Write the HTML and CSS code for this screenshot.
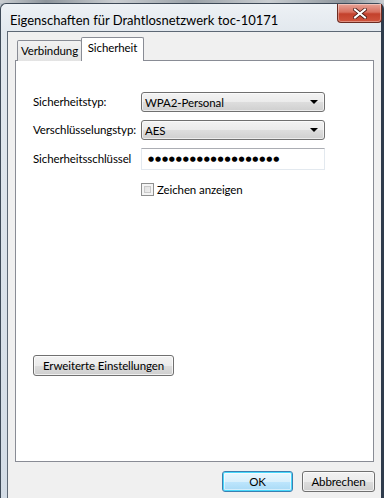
FILE: index.html
```html
<!DOCTYPE html>
<html lang="de">
<head>
<meta charset="utf-8">
<title>Eigenschaften für Drahtlosnetzwerk toc-10171</title>
<link rel="stylesheet" href="styles.css">
</head>
<body>
<div class="backdrop"></div>
<div class="window">
  <div class="titlebar">
    <span class="title">Eigenschaften für Drahtlosnetzwerk toc-10171</span>
    <button class="close" aria-label="Schließen">
      <svg width="14" height="11" viewBox="0 0 14 11"><path d="M2 1.5 L12 9.5 M12 1.5 L2 9.5" stroke="#4a1a14" stroke-width="3.6" stroke-linecap="square"/><path d="M2 1.5 L12 9.5 M12 1.5 L2 9.5" stroke="#fff" stroke-width="2" stroke-linecap="square"/></svg>
    </button>
  </div>
  <div class="client">
    <div class="tabs">
      <div class="tab">Verbindung</div>
      <div class="tab active">Sicherheit</div>
    </div>
    <div class="panel">
      <div class="form">
        <label class="lbl">Sicherheitstyp:</label>
        <div class="combo"><span>WPA2-Personal</span><span class="arrow"></span></div>
        <label class="lbl">Verschlüsselungstyp:</label>
        <div class="combo"><span>AES</span><span class="arrow"></span></div>
        <label class="lbl">Sicherheitsschlüssel</label>
        <div class="input"><span class="dots">●●●●●●●●●●●●●●●●●●●</span></div>
      </div>
      <div class="check-row">
        <span class="checkbox"></span><span>Zeichen anzeigen</span>
      </div>
      <div class="adv-row">
        <button class="btn adv">Erweiterte Einstellungen</button>
      </div>
    </div>
    <div class="footer">
      <button class="btn ok">OK</button>
      <button class="btn cancel">Abbrechen</button>
    </div>
  </div>
</div>
</body>
</html>
```

FILE: styles.css
```css
* { box-sizing: border-box; }
html, body { margin: 0; padding: 0; }
body {
  width: 384px;
  height: 498px;
  overflow: hidden;
  background: #b9c0c7;
  font-family: Lato, "Noto Sans", sans-serif;
  font-size: 11.5px;
  letter-spacing: -0.1px;
  color: #000;
}
.backdrop {
  height: 3px;
  background: linear-gradient(to right, #c9cdd1 0%, #8d949b 12%, #c9cdd1 30%, #9aa1a8 50%, #c9cdd1 70%, #8d949b 90%, #c9cdd1 100%);
}
.window {
  height: 495px;
  border: 1px solid #3e4a58;
  border-bottom: none;
  border-radius: 6px 6px 0 0;
  background: linear-gradient(to bottom, #edf1f5 0px, #e2e8ee 28px, #d3dce6 100%);
  display: flex;
  flex-direction: column;
  padding: 0 0 0 6px;
  border-right: 3px solid #2f3c4c;
}
.titlebar {
  height: 27px;
  display: flex;
  align-items: flex-start;
}
.title {
  font-size: 13px;
  letter-spacing: 0;
  padding: 8px 0 0 3px;
  color: #000;
  white-space: nowrap;
}
.close {
  margin-left: auto;
  margin-right: -1px;
  width: 45px;
  height: 19px;
  border: 1px solid #6b2b22;
  border-top: none;
  border-radius: 0 0 4px 4px;
  background: linear-gradient(to bottom, #e8a397 0%, #d8705f 45%, #c3412c 55%, #d0553e 100%);
  display: flex;
  align-items: center;
  justify-content: center;
  padding: 0;
  box-shadow: inset 0 0 0 1px rgba(255,255,255,0.35);
}
.client {
  flex: 1;
  background: #f0f0f0;
  border: 1px solid #5d6875;
  border-bottom: none;
  border-right: none;
  padding: 5px 7px 0 7px;
  display: flex;
  flex-direction: column;
}
.tabs {
  display: flex;
  align-items: flex-end;
  height: 24px;
  padding-left: 2px;
  position: relative;
  z-index: 1;
  margin-bottom: -1px;
}
.tab {
  border: 1px solid #898c95;
  border-bottom: none;
  height: 21px;
  width: 65px;
  text-align: center;
  padding-top: 3px;
  background: linear-gradient(to bottom, #f2f2f2, #e3e3e3);
  border-radius: 2px 2px 0 0;
}
.tab.active {
  height: 24px;
  width: 63px;
  background: #fff;
  margin-left: -1px;
  padding-top: 3px;
}
.panel {
  height: 402px;
  background: #fff;
  border: 1px solid #898c95;
  padding: 31px 0 0 17px;
}
.form {
  display: grid;
  grid-template-columns: 108px 184px;
  row-gap: 8px;
  align-items: center;
}
.lbl { line-height: 20px; white-space: nowrap; }
.combo {
  height: 20px;
  border: 1px solid #707070;
  border-radius: 3px;
  background: linear-gradient(to bottom, #f3f3f3 0%, #ebebeb 50%, #dddddd 51%, #cfcfcf 100%);
  box-shadow: inset 0 0 0 1px rgba(255,255,255,0.6);
  display: flex;
  align-items: center;
  padding: 0 6px 0 3px;
  justify-content: space-between;
}
.arrow {
  width: 0; height: 0;
  border-left: 4px solid transparent;
  border-right: 4px solid transparent;
  border-top: 4px solid #000;
}
.input {
  height: 22px;
  border: 1px solid #e3e9ef;
  border-top-color: #abadb3;
  background: #fff;
  display: flex;
  align-items: center;
  padding-left: 6px;
}
.dots {
  font-family: "DejaVu Sans", sans-serif;
  font-size: 7px;
  letter-spacing: 0.85px;
  color: #000;
}
.check-row {
  display: flex;
  align-items: center;
  gap: 3px;
  margin: 13px 0 0 108px;
  height: 13px;
}
.checkbox {
  width: 13px; height: 13px;
  border: 1px solid #8e8f8f;
  background: linear-gradient(135deg, #d9d9d9, #f6f6f6);
  box-shadow: inset 0 0 0 2px #f4f4f4, inset 0 0 0 3px #c9c9c9;
}
.adv-row { margin-top: 159px; }
.btn {
  font: inherit;
  letter-spacing: inherit;
  color: #000;
  height: 21px;
  border: 1px solid #707070;
  border-radius: 3px;
  background: linear-gradient(to bottom, #f2f2f2 0%, #ebebeb 50%, #dddddd 51%, #cfcfcf 100%);
  box-shadow: inset 0 0 0 1px rgba(255,255,255,0.7);
  padding: 0;
}
.adv { width: 141px; }
.footer {
  display: flex;
  justify-content: flex-end;
  gap: 9px;
  padding-top: 9px;
  margin-right: -1px;
}
.ok {
  width: 71px;
  border-color: #3c7fb1;
  box-shadow: inset 0 0 0 1px #48d8fb, inset 0 0 0 2px rgba(255,255,255,0.5);
  background: linear-gradient(to bottom, #eaf6fd 0%, #d9f0fc 50%, #bee6fd 51%, #a7d9f5 100%);
}
.cancel { width: 73px; }
```
